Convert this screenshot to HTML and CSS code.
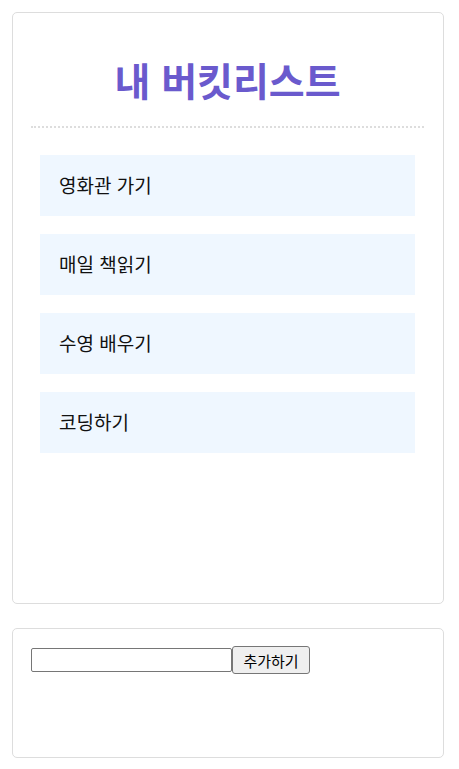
FILE: index.html
```html
<!DOCTYPE html>
<html lang="ko">
<head>
<meta charset="utf-8">
<title>내 버킷리스트</title>
<link rel="stylesheet" href="styles.css">
</head>
<body>
  <div class="card list-card">
    <h1 class="title">내 버킷리스트</h1>
    <ul class="bucket">
      <li class="item">영화관 가기</li>
      <li class="item">매일 책읽기</li>
      <li class="item">수영 배우기</li>
      <li class="item">코딩하기</li>
    </ul>
  </div>
  <div class="card form-card">
    <input class="text-input" type="text">
    <button class="add-btn" type="button">추가하기</button>
  </div>
</body>
</html>
```
FILE: styles.css
```css
html, body {
  margin: 0;
  padding: 0;
  background: #fff;
}
body {
  padding: 12px;
  font-family: "Noto Sans CJK KR", "Noto Sans", sans-serif;
  color: #000;
}
.card {
  box-sizing: border-box;
  width: 432px;
  border: 1px solid #dddddd;
  border-radius: 5px;
  background: #fff;
}
.list-card {
  height: 592px;
  padding: 0 19px 0 18px;
}
.title {
  margin: 0;
  padding: 40px 0 21px;
  line-height: 52px;
  font-size: 39px;
  font-weight: 700;
  text-align: center;
  color: #6a5acd;
  border-bottom: 2px dotted #dddddd;
}
.bucket {
  list-style: none;
  margin: 27px 0 0;
  padding: 0 9px;
  display: flex;
  flex-direction: column;
  gap: 18px;
}
.item {
  height: 61px;
  display: flex;
  align-items: center;
  padding-left: 19px;
  padding-bottom: 2px;
  box-sizing: border-box;
  background: #eff7ff;
  font-size: 19px;
  color: #111;
}
.form-card {
  margin-top: 24px;
  height: 130px;
  padding: 17px 18px;
  display: flex;
  align-items: flex-start;
}
.text-input {
  box-sizing: border-box;
  width: 201px;
  height: 24px;
  margin: 2px 0 0;
  padding: 1px 2px;
  border: 1px solid #767676;
  border-radius: 2px;
  font-size: 13.33px;
}
.add-btn {
  box-sizing: border-box;
  width: 78px;
  height: 28px;
  margin: 0;
  padding: 0 6px;
  border: 1px solid #767676;
  border-radius: 3px;
  background: #efefef;
  color: #000;
  font-family: "Noto Sans CJK KR", sans-serif;
  font-size: 15px;
}
```
